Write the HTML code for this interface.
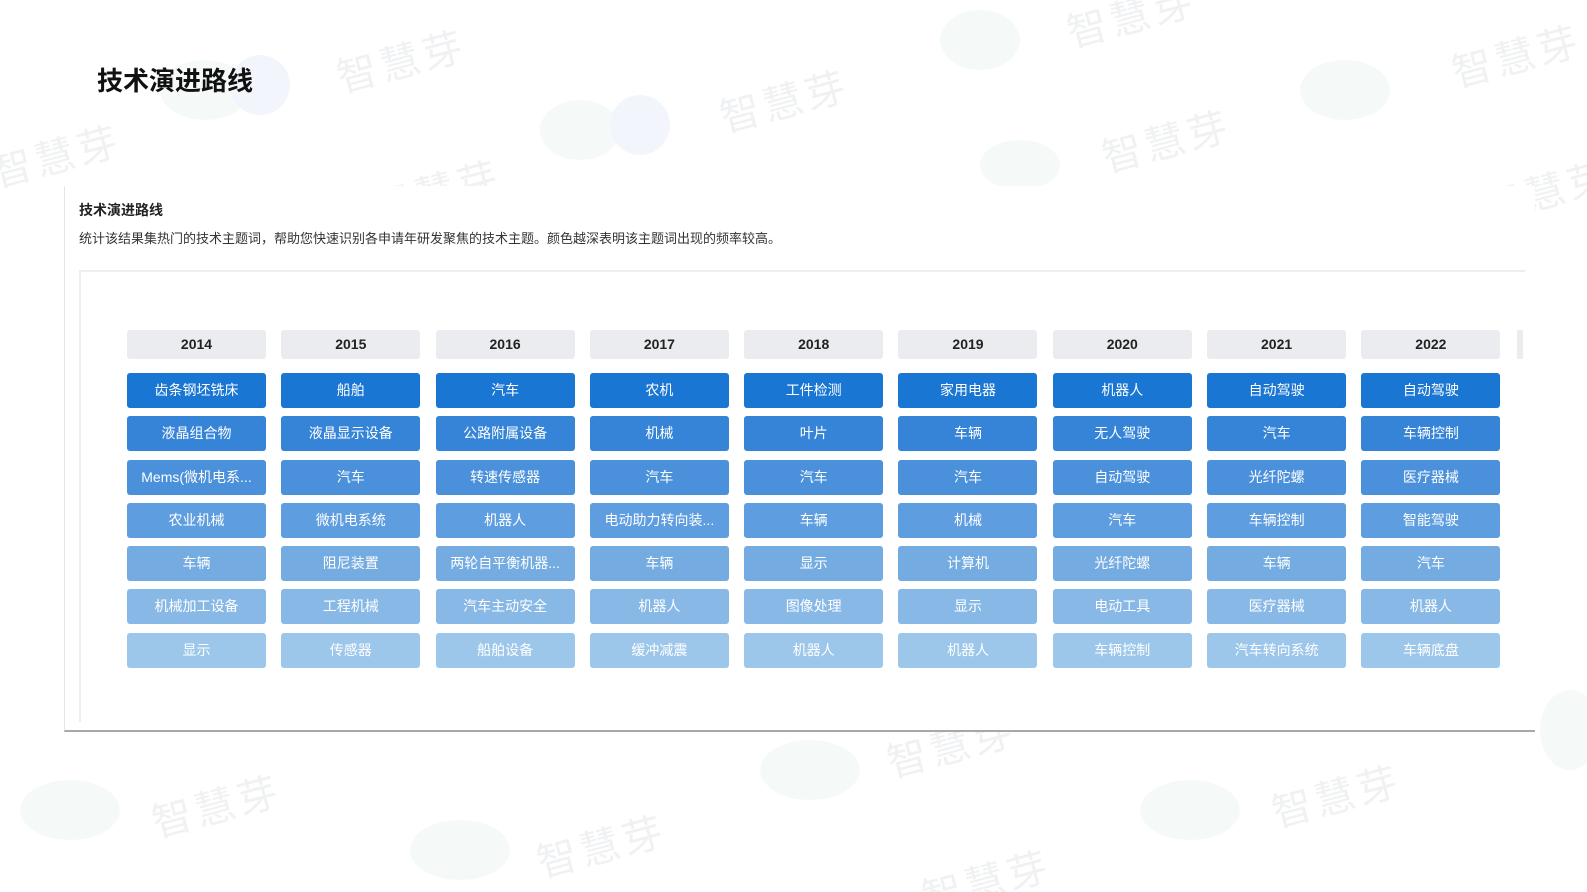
<!DOCTYPE html>
<html><head><meta charset="utf-8"><style>
html,body{margin:0;padding:0;width:1587px;height:892px;overflow:hidden;background:#fff;font-family:"Liberation Sans","Noto Sans CJK SC",sans-serif;position:relative}
.wm{position:absolute;color:#eff1f3;font-size:40px;transform:rotate(-15deg);white-space:nowrap;letter-spacing:4px}
.blob{position:absolute;border-radius:50%;background:#f5faf8}
.blob2{position:absolute;border-radius:50%;background:#f2f6fc}
h1{position:absolute;left:97px;top:61px;margin:0;font-size:26px;font-weight:bold;color:#111}
.card{position:absolute;left:64px;top:186px;width:1470px;height:544px;background:#fff;border-left:1px solid #e6e6e6;border-bottom:2px solid #a8a8a8}
.t{position:absolute;left:14px;top:14px;font-size:14px;font-weight:bold;color:#222}
.d{position:absolute;left:14px;top:42px;font-size:13px;color:#333}
.box{position:absolute;left:14px;top:84px;width:1444px;height:450px;border-top:2px solid #eee;border-left:2px solid #eee}
.grid{position:absolute;left:127px;top:330px;display:grid;grid-template-columns:repeat(9,139px);column-gap:15.3px}
.col div{height:35px;line-height:35px;text-align:center;border-radius:3px;color:#fff;font-size:14px;margin-bottom:8.3px;white-space:nowrap;overflow:hidden}
.col div.y{height:29px;line-height:29px;background:#ebecef;color:#222;font-weight:bold;margin-bottom:14px}
.col div:nth-child(2){background:#1976d2}
.col div:nth-child(3){background:#3584d7}
.col div:nth-child(4){background:#4a90db}
.col div:nth-child(5){background:#5e9ddf}
.col div:nth-child(6){background:#74ace2}
.col div:nth-child(7){background:#88b9e6}
.col div:nth-child(8){background:#9dc7ea}
.stub{position:absolute;left:1517px;top:330px;width:6px;height:29px;background:#ebecef;border-radius:2px}
</style></head><body>
<div class="blob" style="left:160px;top:60px;width:90px;height:60px"></div>
<div class="blob2" style="left:230px;top:55px;width:60px;height:60px"></div>
<div class="blob" style="left:540px;top:100px;width:80px;height:60px"></div>
<div class="blob2" style="left:610px;top:95px;width:60px;height:60px"></div>
<div class="blob" style="left:940px;top:10px;width:80px;height:60px"></div>
<div class="blob" style="left:1300px;top:60px;width:90px;height:60px"></div>
<div class="blob" style="left:980px;top:140px;width:80px;height:50px"></div>
<div class="blob" style="left:20px;top:780px;width:100px;height:60px"></div>
<div class="blob" style="left:410px;top:820px;width:100px;height:60px"></div>
<div class="blob" style="left:760px;top:740px;width:100px;height:60px"></div>
<div class="blob" style="left:1140px;top:780px;width:100px;height:60px"></div>
<div class="blob" style="left:1540px;top:690px;width:60px;height:80px"></div>
<div class="wm" style="left:335px;top:30px">智慧芽</div>
<div class="wm" style="left:718px;top:70px">智慧芽</div>
<div class="wm" style="left:1100px;top:110px">智慧芽</div>
<div class="wm" style="left:1450px;top:25px">智慧芽</div>
<div class="wm" style="left:-10px;top:125px">智慧芽</div>
<div class="wm" style="left:370px;top:160px">智慧芽</div>
<div class="wm" style="left:1065px;top:-15px">智慧芽</div>
<div class="wm" style="left:1480px;top:160px">智慧芽</div>
<div class="wm" style="left:150px;top:775px">智慧芽</div>
<div class="wm" style="left:535px;top:815px">智慧芽</div>
<div class="wm" style="left:885px;top:715px">智慧芽</div>
<div class="wm" style="left:1270px;top:765px">智慧芽</div>
<div class="wm" style="left:920px;top:850px">智慧芽</div>
<h1>技术演进路线</h1>
<div class="card">
<div class="t">技术演进路线</div>
<div class="d">统计该结果集热门的技术主题词，帮助您快速识别各申请年研发聚焦的技术主题。颜色越深表明该主题词出现的频率较高。</div>
<div class="box"></div>
</div>
<div class="grid">
<div class="col"><div class="y">2014</div><div>齿条钢坯铣床</div><div>液晶组合物</div><div>Mems(微机电系...</div><div>农业机械</div><div>车辆</div><div>机械加工设备</div><div>显示</div></div>
<div class="col"><div class="y">2015</div><div>船舶</div><div>液晶显示设备</div><div>汽车</div><div>微机电系统</div><div>阻尼装置</div><div>工程机械</div><div>传感器</div></div>
<div class="col"><div class="y">2016</div><div>汽车</div><div>公路附属设备</div><div>转速传感器</div><div>机器人</div><div>两轮自平衡机器...</div><div>汽车主动安全</div><div>船舶设备</div></div>
<div class="col"><div class="y">2017</div><div>农机</div><div>机械</div><div>汽车</div><div>电动助力转向装...</div><div>车辆</div><div>机器人</div><div>缓冲减震</div></div>
<div class="col"><div class="y">2018</div><div>工件检测</div><div>叶片</div><div>汽车</div><div>车辆</div><div>显示</div><div>图像处理</div><div>机器人</div></div>
<div class="col"><div class="y">2019</div><div>家用电器</div><div>车辆</div><div>汽车</div><div>机械</div><div>计算机</div><div>显示</div><div>机器人</div></div>
<div class="col"><div class="y">2020</div><div>机器人</div><div>无人驾驶</div><div>自动驾驶</div><div>汽车</div><div>光纤陀螺</div><div>电动工具</div><div>车辆控制</div></div>
<div class="col"><div class="y">2021</div><div>自动驾驶</div><div>汽车</div><div>光纤陀螺</div><div>车辆控制</div><div>车辆</div><div>医疗器械</div><div>汽车转向系统</div></div>
<div class="col"><div class="y">2022</div><div>自动驾驶</div><div>车辆控制</div><div>医疗器械</div><div>智能驾驶</div><div>汽车</div><div>机器人</div><div>车辆底盘</div></div>
</div>
<div class="stub"></div>
</body></html>
